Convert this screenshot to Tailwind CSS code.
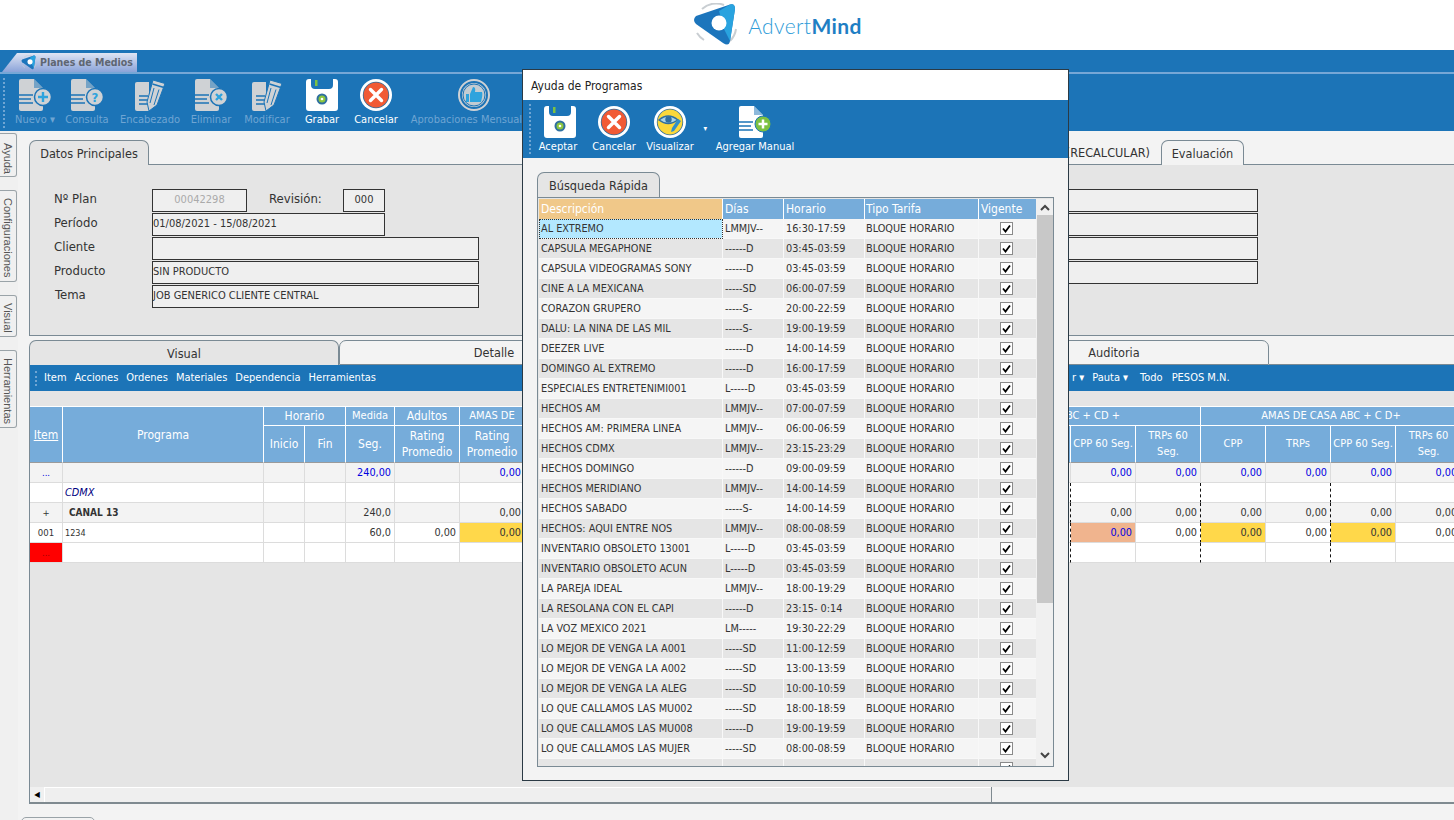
<!DOCTYPE html>
<html lang="es">
<head>
  <meta charset="UTF-8">
  <title>AdvertMind - Planes de Medios</title>
  <script src="https://cdn.jsdelivr.net/npm/@tailwindcss/browser@4"></script>
</head>
<body class="relative h-[820px] w-[1454px] overflow-hidden bg-[#f3f3f3] text-[11px] text-[#333] font-['DejaVu_Sans_Condensed','DejaVu_Sans',sans-serif]">

  <!-- iconos -->
  <svg class="hidden">
    <symbol id="doc" viewBox="0 0 32 32">
      <path d="M2 0H15L24 9V30a2 2 0 0 1-2 2H2a2 2 0 0 1-2-2V2a2 2 0 0 1 2-2Z" fill="currentColor"/>
      <path d="M15 0L24 9H15Z" fill="#1c74b7" opacity=".5"/>
      <path d="M0 16H14M0 20H12M0 24H14" stroke="#1c74b7" stroke-width="1.5"/>
      <circle cx="24" cy="18" r="8.5" fill="currentColor" stroke="#1c74b7" stroke-width="1.5"/>
    </symbol>
    <symbol id="edit" viewBox="0 0 30 32">
      <path d="M2 3H14V32H2a2 2 0 0 1-2-2V5a2 2 0 0 1 2-2Z" fill="currentColor"/>
      <path d="M4 17H13M4 21H13M4 25H13" stroke="#1c74b7" stroke-width="1.5"/>
      <path d="M18 1L30 4.500L22 26L14 32L12 23Z" fill="currentColor" stroke="#1c74b7"/>
      <path d="M17.500 5L29 8.500" stroke="#1c74b7" stroke-width="1.500"/>
      <path d="M19 9L15 24M24 10.500L19 26" stroke="#1c74b7"/>
    </symbol>
    <symbol id="disk" viewBox="0 0 32 32">
      <path d="M3 0H5V6a4 4 0 0 0 4 4H23a4 4 0 0 0 4-4V0H29a3 3 0 0 1 3 3V29a3 3 0 0 1-3 3H3a3 3 0 0 1-3-3V3a3 3 0 0 1 3-3Z" fill="#fff"/>
      <rect x="9" y="1" width="2.5" height="6" fill="#7cc142"/>
      <circle cx="16" cy="20" r="5.5" fill="#2f6f9f"/>
      <circle cx="16" cy="20" r="3.5" fill="#8cc63f"/>
      <circle cx="16" cy="20" r="1.3" fill="#fff"/>
    </symbol>
    <symbol id="cancel" viewBox="0 0 32 32">
      <circle cx="16" cy="16" r="16" fill="#fff"/>
      <circle cx="16" cy="16" r="13.2" fill="#2f6f9f"/>
      <circle cx="16" cy="16" r="12.4" fill="#f15a35"/>
      <path d="M10.5 10.5L21.5 21.5M21.5 10.5L10.5 21.5" stroke="#fff" stroke-width="3.4" stroke-linecap="round"/>
    </symbol>
    <symbol id="logo" viewBox="0 0 44 44">
      <path d="M8 6A21 21 0 0 1 30 2" fill="none" stroke="#c9ced2" stroke-width="2"/>
      <path d="M42 26A21 21 0 0 1 36 38" fill="none" stroke="#c9ced2" stroke-width="2"/>
      <path d="M10 37A21 21 0 0 1 3 30" fill="none" stroke="#c9ced2" stroke-width="2"/>
      <path d="M2 13L36 1.500Q41 0 41 6L36 38Q35 44 29 40L2 21Q-2 17 2 13Z" fill="#1c75bc"/>
      <path d="M36 1.500Q41 0 41 6L36 38L30 26L25 8Z" fill="#29a3df"/>
      <circle cx="25" cy="20" r="7.500" fill="#fff"/>
    </symbol>
  </svg>

  <!-- logo -->
  <header class="flex h-[50px] items-center justify-center bg-white pl-[102px]">
    <svg class="mr-[10px] h-[44px] w-[44px]"><use href="#logo"/></svg>
    <span class="text-[21px] leading-none tracking-[.4px] text-[#2e9bd8] font-['Lato',sans-serif] font-light">Advert<span class="font-bold text-[#1f7fc4]">Mind</span></span>
  </header>

  <!-- barra azul superior -->
  <div class="h-[81px] bg-[#1c74b7]">
    <div class="box-content flex h-[22px] items-end border-b-2 border-[#76a7d6] pl-[2px]">
      <div class="flex h-[19px] w-[135px] items-center bg-linear-to-b from-[#dfe5f3] to-[#8ba3d8] pl-[19px] text-[10.500px] font-bold text-[#5e6672] [clip-path:polygon(0_100%,15px_0,100%_0,100%_100%)]">
        <svg class="mr-[3px] h-[15px] w-[16px] shrink-0"><use href="#logo"/></svg>Planes de Medios
      </div>
    </div>
    <div class="relative flex h-[57px] pl-[10px] text-[#6fa5d3]">
      <div class="absolute top-[4px] left-[3px] h-[50px] border-l-2 border-dotted border-[#6fa5d3]"></div>
      <button class="flex w-[50px] flex-col items-center pt-[5px]">
        <svg class="h-[32px] w-[32px] text-[#cfd2d5]" viewBox="0 0 32 32"><use href="#doc"/><path d="M24 13V23M19 18H29" stroke="#2ea3dd" stroke-width="2.400"/></svg>
        <span class="mt-[1px]">Nuevo ▾</span>
      </button>
      <button class="flex w-[54px] flex-col items-center pt-[5px]">
        <svg class="h-[32px] w-[32px] text-[#cfd2d5]" viewBox="0 0 32 32"><use href="#doc"/><text x="24" y="23" text-anchor="middle" fill="#2ea3dd" font-size="13" font-weight="700">?</text></svg>
        <span class="mt-[1px]">Consulta</span>
      </button>
      <button class="flex w-[72px] flex-col items-center pt-[5px]">
        <svg class="h-[32px] w-[30px] text-[#cfd2d5]"><use href="#edit"/></svg>
        <span class="mt-[1px]">Encabezado</span>
      </button>
      <button class="flex w-[50px] flex-col items-center pt-[5px]">
        <svg class="h-[32px] w-[32px] text-[#cfd2d5]" viewBox="0 0 32 32"><use href="#doc"/><path d="M21 15L27 21M27 15L21 21" stroke="#2ea3dd" stroke-width="2.400"/></svg>
        <span class="mt-[1px]">Eliminar</span>
      </button>
      <button class="flex w-[62px] flex-col items-center pt-[5px]">
        <svg class="h-[32px] w-[30px] text-[#cfd2d5]"><use href="#edit"/></svg>
        <span class="mt-[1px]">Modificar</span>
      </button>
      <button class="flex w-[48px] flex-col items-center pt-[5px] text-white">
        <svg class="h-[32px] w-[32px]"><use href="#disk"/></svg>
        <span class="mt-[1px]">Grabar</span>
      </button>
      <button class="flex w-[60px] flex-col items-center pt-[5px] text-white">
        <svg class="h-[32px] w-[32px]"><use href="#cancel"/></svg>
        <span class="mt-[1px]">Cancelar</span>
      </button>
      <button class="flex w-[136px] flex-col items-center pt-[5px]">
        <svg class="h-[32px] w-[32px]" viewBox="0 0 32 32">
          <circle cx="16" cy="16" r="15" fill="#1c74b7" stroke="#cfd2d5" stroke-width="2"/>
          <circle cx="16" cy="16" r="12" fill="#cfd2d5"/>
          <circle cx="16" cy="16" r="11" fill="#c3ccd2" stroke="#1c74b7"/>
          <path d="M8 15H11V23H8ZM12 15L15 8Q18 8 17 13H24Q25 15 23 23H12Z" fill="#2ea3dd"/>
        </svg>
        <span class="mt-[1px] -ml-[4px] whitespace-nowrap">Aprobaciones Mensuales</span>
      </button>
    </div>
  </div>

  <div class="flex h-[689px]">
    <!-- pestañas verticales -->
    <aside class="flex w-[18px] shrink-0 flex-col items-start bg-[#f0f0f0] pt-[2px] font-['Liberation_Sans',sans-serif] text-[#555]">
      <div class="flex h-[44px] w-[17px] justify-center rounded-r-[3px] border border-l-0 border-[#9aa3a8] pt-[6px] [writing-mode:vertical-rl]">Ayuda</div>
      <div class="mt-[13px] flex h-[92px] w-[17px] justify-center rounded-r-[3px] border border-l-0 border-[#9aa3a8] pt-[4px] [writing-mode:vertical-rl]">Configuraciones</div>
      <div class="mt-[13px] flex h-[42px] w-[17px] justify-center rounded-r-[3px] border border-l-0 border-[#9aa3a8] pt-[4px] [writing-mode:vertical-rl]">Visual</div>
      <div class="mt-[13px] flex h-[78px] w-[17px] justify-center rounded-r-[3px] border border-l-0 border-[#9aa3a8] pt-[4px] [writing-mode:vertical-rl]">Herramientas</div>
    </aside>

    <main class="ml-[11px] min-w-0 flex-1">
      <!-- Datos principales -->
      <div class="flex h-[34px] items-end pt-[10px] text-[12.600px]">
        <div class="flex h-[25px] w-[120px] items-center justify-center rounded-t-[7px] border border-b-0 border-[#7a8a94] bg-[#e5e5e5] pt-[2px]">Datos Principales</div>
        <div class="flex h-[25px] w-[1012px] items-center justify-end border-b border-[#7a8a94] pt-[2px] pr-[11px]">(RECALCULAR)</div>
        <div class="flex h-[25px] w-[83px] items-center justify-center rounded-t-[7px] border border-b-0 border-[#7a8a94] pt-[2px]">Evaluación</div>
        <div class="h-[25px] flex-1 border-b border-[#7a8a94]"></div>
      </div>
      <div class="flex h-[171px] border-b border-l border-[#7a8a94] bg-[#e5e5e5] pt-[23px] text-[13px]">
        <div class="w-[450px] shrink-0 pl-[24px]">
          <div class="flex h-[24px] items-center">
            <span class="w-[98px] pb-[2px]">Nº Plan</span>
            <div class="flex h-[23px] w-[95px] items-center justify-center border border-[#333] bg-[#efefef] text-[11px] text-[#aaa]">00042298</div>
            <span class="ml-[22px] w-[74px] pb-[2px]">Revisión:</span>
            <div class="flex h-[23px] w-[42px] items-center justify-center border border-[#333] bg-[#efefef] text-[11px]">000</div>
          </div>
          <div class="flex h-[24px] items-center">
            <span class="w-[98px] pb-[2px]">Período</span>
            <div class="flex h-[23px] w-[233px] items-center border border-[#333] bg-[#efefef] text-[11px]">01/08/2021 - 15/08/2021</div>
          </div>
          <div class="flex h-[24px] items-center">
            <span class="w-[98px] pb-[2px]">Cliente</span>
            <div class="h-[23px] w-[327px] border border-[#333] bg-[#efefef]"></div>
          </div>
          <div class="flex h-[24px] items-center">
            <span class="w-[98px] pb-[2px]">Producto</span>
            <div class="flex h-[23px] w-[327px] items-center border border-[#333] bg-[#efefef] text-[11px]">SIN PRODUCTO</div>
          </div>
          <div class="flex h-[24px] items-center">
            <span class="w-[98px] pb-[2px] pl-[1px]">Tema</span>
            <div class="flex h-[23px] w-[327px] items-center border border-[#333] bg-[#efefef] text-[11px]">JOB GENERICO CLIENTE CENTRAL</div>
          </div>
        </div>
        <div class="ml-[320px] w-[458px]">
          <div class="flex h-[24px] items-center"><div class="h-[23px] w-full border border-[#333] bg-[#efefef]"></div></div>
          <div class="flex h-[24px] items-center"><div class="h-[23px] w-full border border-[#333] bg-[#efefef]"></div></div>
          <div class="flex h-[24px] items-center"><div class="h-[23px] w-full border border-[#333] bg-[#efefef]"></div></div>
          <div class="flex h-[24px] items-center"><div class="h-[23px] w-full border border-[#333] bg-[#efefef]"></div></div>
        </div>
      </div>

      <!-- pestañas del detalle -->
      <div class="mt-[4px] flex h-[25px] text-[12.600px]">
        <div class="flex w-[310px] items-center justify-center rounded-t-[7px] border border-b-0 border-[#7a8a94] bg-[#e5e5e5] pt-[2px]">Visual</div>
        <div class="flex w-[310px] items-center justify-center rounded-t-[7px] border border-[#7a8a94] pt-[2px]">Detalle</div>
        <div class="flex w-[310px] items-center justify-center border-b border-[#7a8a94]"></div>
        <div class="flex w-[310px] items-center justify-center rounded-t-[7px] border border-[#7a8a94] pt-[2px]">Auditoria</div>
        <div class="flex-1 border-b border-[#7a8a94]"></div>
      </div>

      <div class="flex h-[439px] flex-col border-l border-[#7a8a94] bg-[#e5e5e5]">
        <div class="flex h-[26px] shrink-0 items-center bg-[#1c74b7] pt-[1px] pl-[5px] text-white">
          <div class="mr-[7px] h-[15px] border-l-2 border-dotted border-[#6fa5d3]"></div>
          <span class="mr-[8px]">Item</span>
          <span class="mr-[8px]">Acciones</span>
          <span class="mr-[8px]">Ordenes</span>
          <span class="mr-[8px]">Materiales</span>
          <span class="mr-[8px]">Dependencia</span>
          <span>Herramientas</span>
          <span class="ml-[696px] mr-[8px]">r ▾</span>
          <span class="mr-[12px]">Pauta ▾</span>
          <span class="mr-[9px]">Todo</span>
          <span>PESOS M.N.</span>
        </div>

        <div class="h-[15px] shrink-0"></div>

        <table class="w-[1431px] shrink-0 table-fixed border-separate border-spacing-0">
          <colgroup>
            <col class="w-[33px]"><col class="w-[201px]"><col class="w-[41px]"><col class="w-[41px]"><col class="w-[49px]"><col class="w-[65px]"><col class="w-[65px]"><col class="w-[546px]">
            <col class="w-[65px]"><col class="w-[65px]"><col class="w-[65px]"><col class="w-[65px]"><col class="w-[65px]"><col class="w-[65px]">
          </colgroup>
          <thead class="bg-[#76acda] text-white">
            <tr class="h-[19px]">
              <th rowspan="2" class="border-r border-b border-r-white border-b-[#9a9a9a] border-t border-t-white text-[12px] font-normal underline">Item</th>
              <th rowspan="2" class="border-r border-b border-r-white border-b-[#9a9a9a] border-t border-t-white text-[12px] font-normal">Programa</th>
              <th colspan="2" class="border-r border-b border-white border-t text-[12px] font-normal">Horario</th>
              <th class="border-r border-b border-white border-t font-normal">Medida</th>
              <th class="border-r border-b border-white border-t text-[12px] font-normal">Adultos</th>
              <th class="border-r border-b border-white border-t font-normal">AMAS DE</th>
              <th colspan="3" class="whitespace-nowrap border-r border-b border-white border-t pr-[80px] text-right font-normal">AMAS DE CASA ABC + CD +</th>
              <th colspan="4" class="whitespace-nowrap border-b border-white border-t font-normal">AMAS DE CASA ABC + C D+</th>
            </tr>
            <tr class="h-[37px]">
              <th class="border-r border-b border-r-white border-b-[#9a9a9a] text-[12px] font-normal">Inicio</th>
              <th class="border-r border-b border-r-white border-b-[#9a9a9a] text-[12px] font-normal">Fin</th>
              <th class="border-r border-b border-r-white border-b-[#9a9a9a] text-[12px] font-normal">Seg.</th>
              <th class="border-r border-b border-r-white border-b-[#9a9a9a] text-[12px] font-normal leading-[16px]">Rating Promedio</th>
              <th class="border-r border-b border-r-white border-b-[#9a9a9a] text-[12px] font-normal leading-[16px]">Rating Promedio</th>
              <th class="border-r border-b border-r-white border-b-[#9a9a9a]"></th>
              <th class="border-r border-b border-r-white border-b-[#9a9a9a] font-normal">CPP 60 Seg.</th>
              <th class="border-r border-b border-r-white border-b-[#9a9a9a] font-normal leading-[16px]">TRPs 60 Seg.</th>
              <th class="border-r border-b border-r-white border-b-[#9a9a9a] font-normal">CPP</th>
              <th class="border-r border-b border-r-white border-b-[#9a9a9a] font-normal">TRPs</th>
              <th class="border-r border-b border-r-white border-b-[#9a9a9a] font-normal">CPP 60 Seg.</th>
              <th class="border-b border-b-[#9a9a9a] px-[12px] font-normal leading-[16px]">TRPs 60 Seg.</th>
            </tr>
          </thead>
          <tbody id="plan" class="text-[10.800px]"></tbody>
        </table>

        <div class="flex-1"></div>
        <div class="flex h-[17px] shrink-0 border-b-2 border-[#7f8a90]">
          <div class="flex w-[15px] items-center justify-center border-r border-white bg-[#f0f0f0] text-[8px] text-black">◀</div>
          <div class="w-[946px] border-t border-white bg-[#efefef]"></div>
          <div class="flex-1 border-l border-[#7f8a90] bg-[#f3f3f3]"></div>
        </div>
      </div>
    </main>
  </div>

  <div class="absolute top-[817px] left-[21px] h-[8px] w-[74px] rounded-t-[5px] border border-[#9aa3a8]"></div>

  <!-- Ayuda de Programas -->
  <section class="absolute top-[69px] left-[522px] flex h-[712px] w-[547px] flex-col border border-[#2b3a45] bg-[#f3f3f3]">
    <div class="flex h-[30px] shrink-0 items-center bg-white pt-[1px] pl-[8px] text-[12px] text-[#222]">Ayuda de Programas</div>
    <div class="relative flex h-[58px] shrink-0 items-start bg-[#1c74b7] text-white">
      <div class="absolute top-[4px] left-[6px] h-[50px] border-l-2 border-dotted border-[#6fa5d3]"></div>
      <button class="ml-[13px] flex w-[44px] flex-col items-center pt-[6px]">
        <svg class="ml-[4px] h-[32px] w-[32px]"><use href="#disk"/></svg>
        <span class="mt-[1px]">Aceptar</span>
      </button>
      <button class="ml-[8px] flex w-[52px] flex-col items-center pt-[6px]">
        <svg class="h-[32px] w-[32px]"><use href="#cancel"/></svg>
        <span class="mt-[1px]">Cancelar</span>
      </button>
      <button class="relative ml-[4px] flex w-[52px] flex-col items-center pt-[6px]">
        <svg class="h-[32px] w-[32px]" viewBox="0 0 32 32">
          <circle cx="16" cy="16" r="16" fill="#fff"/>
          <circle cx="16" cy="16" r="13.200" fill="#2f6f9f"/>
          <circle cx="16" cy="16" r="12.400" fill="#fbd83a"/>
          <path d="M5 14Q14 6 24 14Q14 21 5 14Z" fill="#a8d4e8" stroke="#2f6f9f" stroke-width="1.500"/>
          <circle cx="14.500" cy="13.500" r="3.200" fill="#2f6f9f"/>
          <path d="M24 13L27 15L20 25L17 26L18 22Z" fill="#2f8fcb"/>
        </svg>
        <span class="mt-[1px]">Visualizar</span>
        <span class="absolute top-[23px] right-[-11px] text-[8px]">▾</span>
      </button>
      <button class="ml-[19px] flex w-[80px] flex-col items-center pt-[6px]">
        <svg class="h-[32px] w-[32px]" viewBox="0 0 32 32">
          <path d="M2 0H15L24 9V30a2 2 0 0 1-2 2H2a2 2 0 0 1-2-2V2a2 2 0 0 1 2-2Z" fill="#fff"/>
          <path d="M15 0L24 9H15Z" fill="#1c74b7" opacity=".5"/>
          <path d="M0 16H14M0 20H12M0 24H14" stroke="#1c74b7" stroke-width="1.500"/>
          <circle cx="24" cy="18" r="8" fill="#7cc142" stroke="#1c74b7"/>
          <path d="M24 13.500V22.500M19.500 18H28.500" stroke="#fff" stroke-width="2.500"/>
        </svg>
        <span class="mt-[1px] whitespace-nowrap">Agregar Manual</span>
      </button>
    </div>

    <div class="mt-[14px] ml-[14px] flex h-[25px] w-[123px] items-center justify-center rounded-t-[7px] border border-b-0 border-[#7a8a94] bg-[#e5e5e5] pt-[2px] text-[12.600px]">Búsqueda Rápida</div>
    <div class="ml-[14px] flex h-[570px] w-[517px] overflow-hidden border border-[#7a8a94] bg-[#e5e5e5] pt-[1px] pl-[1px]">
      <table class="h-fit w-[497px] shrink-0 table-fixed border-separate border-spacing-0">
        <colgroup><col class="w-[184px]"><col class="w-[61px]"><col class="w-[81px]"><col class="w-[114px]"><col class="w-[57px]"></colgroup>
        <thead class="text-[12px] text-white">
          <tr class="h-[20px]">
            <th class="border-r border-white bg-[#f0c889] pl-[2px] text-left font-normal">Descripción</th>
            <th class="border-r border-white bg-[#76acda] pl-[2px] text-left font-normal">Días</th>
            <th class="border-r border-white bg-[#76acda] pl-[2px] text-left font-normal">Horario</th>
            <th class="border-r border-white bg-[#76acda] pl-[1px] text-left font-normal">Tipo Tarifa</th>
            <th class="bg-[#76acda] pl-[2px] text-left font-normal">Vigente</th>
          </tr>
        </thead>
        <tbody id="programas" class="text-[10.800px]"></tbody>
      </table>
      <div class="flex w-[17px] shrink-0 flex-col items-center bg-[#f0f0f0]">
        <svg class="mt-[5px] h-[8px] w-[10px]" viewBox="0 0 10 8"><path d="M1 6L5 2L9 6" fill="none" stroke="#444" stroke-width="2"/></svg>
        <div class="mt-[3px] h-[388px] w-[16px] bg-[#c8c8c8]"></div>
        <svg class="mt-[148px] h-[8px] w-[10px]" viewBox="0 0 10 8"><path d="M1 2L5 6L9 2" fill="none" stroke="#444" stroke-width="2"/></svg>
      </div>
    </div>
  </section>

  <script>
    // filas del plan
    const cell = 'border-r border-b border-[#dcdcdc] pt-[1px] pr-[3px] text-right overflow-hidden whitespace-nowrap';
    const dash = 'border-r-[#111] [border-right-style:dashed]';
    const rows = [
      { bg: 'bg-[#f3f3f3]', tone: 'text-[#0000e0]', item: '...', prog: '', seg: '240,00', ad: '', am: '0,00', vals: ['0,00','0,00','0,00','0,00','0,00','0,00'], dashes: false },
      { bg: 'bg-white', tone: '', item: '', prog: '<i class="text-[#000080]">CDMX</i>', seg: '', ad: '', am: '', vals: ['','','','','',''], dashes: true },
      { bg: 'bg-[#f3f3f3]', tone: '', item: '+', prog: '<b class="pl-[4px] text-[10px] font-bold">CANAL 13</b>', seg: '240,0', ad: '', am: '0,00', vals: ['0,00','0,00','0,00','0,00','0,00','0,00'], dashes: true },
      { bg: 'bg-white', tone: '', item: '001', prog: '<span class="text-[9px]">1234</span>', seg: '60,0', ad: '0,00', am: '0,00', vals: ['0,00','0,00','0,00','0,00','0,00','0,00'], dashes: true, fill: true },
      { bg: 'bg-white', tone: '', item: '...', prog: '', seg: '', ad: '', am: '', vals: ['','','','','',''], dashes: true, red: true }
    ];
    document.getElementById('plan').innerHTML = rows.map(r => {
      const mark = r.dashes ? dash : '';
      return `<tr class="h-[20px] ${r.bg} ${r.tone}">
        <td class="border-r border-b border-[#dcdcdc] pt-[1px] text-center text-[9.500px] ${r.red ? 'bg-[#ff0000] text-[#a00000]' : ''}">${r.item}</td>
        <td class="border-r border-b border-[#dcdcdc] pt-[1px] pl-[2px]">${r.prog}</td>
        <td class="${cell}"></td><td class="${cell}"></td>
        <td class="${cell}">${r.seg}</td>
        <td class="${cell}">${r.ad}</td>
        <td class="${cell} ${r.fill ? 'bg-[#ffd84a]' : ''}">${r.am}</td>
        <td class="${cell} ${mark}"></td>
        <td class="${cell} ${r.fill ? 'bg-[#f0b48e] text-[#0000e0]' : ''}">${r.vals[0]}</td>
        <td class="${cell} ${mark}">${r.vals[1]}</td>
        <td class="${cell} ${r.fill ? 'bg-[#ffd84a]' : ''}">${r.vals[2]}</td>
        <td class="${cell} ${mark}">${r.vals[3]}</td>
        <td class="${cell} ${r.fill ? 'bg-[#ffd84a]' : ''}">${r.vals[4]}</td>
        <td class="${cell}">${r.vals[5]}</td>
      </tr>`;
    }).join('');

    const programas = [
      ['AL EXTREMO','LMMJV--','16:30-17:59'],
      ['CAPSULA MEGAPHONE','------D','03:45-03:59'],
      ['CAPSULA VIDEOGRAMAS SONY','------D','03:45-03:59'],
      ['CINE A LA MEXICANA','-----SD','06:00-07:59'],
      ['CORAZON GRUPERO','-----S-','20:00-22:59'],
      ['DALU: LA NINA DE LAS MIL','-----S-','19:00-19:59'],
      ['DEEZER LIVE','------D','14:00-14:59'],
      ['DOMINGO AL EXTREMO','------D','16:00-17:59'],
      ['ESPECIALES ENTRETENIMI001','L-----D','03:45-03:59'],
      ['HECHOS AM','LMMJV--','07:00-07:59'],
      ['HECHOS AM: PRIMERA LINEA','LMMJV--','06:00-06:59'],
      ['HECHOS CDMX','LMMJV--','23:15-23:29'],
      ['HECHOS DOMINGO','------D','09:00-09:59'],
      ['HECHOS MERIDIANO','LMMJV--','14:00-14:59'],
      ['HECHOS SABADO','-----S-','14:00-14:59'],
      ['HECHOS: AQUI ENTRE NOS','LMMJV--','08:00-08:59'],
      ['INVENTARIO OBSOLETO 13001','L-----D','03:45-03:59'],
      ['INVENTARIO OBSOLETO ACUN','L-----D','03:45-03:59'],
      ['LA PAREJA IDEAL','LMMJV--','18:00-19:29'],
      ['LA RESOLANA CON EL CAPI','------D','23:15- 0:14'],
      ['LA VOZ MEXICO 2021','LM-----','19:30-22:29'],
      ['LO MEJOR DE VENGA LA A001','-----SD','11:00-12:59'],
      ['LO MEJOR DE VENGA LA A002','-----SD','13:00-13:59'],
      ['LO MEJOR DE VENGA LA ALEG','-----SD','10:00-10:59'],
      ['LO QUE CALLAMOS LAS MU002','-----SD','18:00-18:59'],
      ['LO QUE CALLAMOS LAS MU008','------D','19:00-19:59'],
      ['LO QUE CALLAMOS LAS MUJER','-----SD','08:00-08:59'],
      ['','','']
    ];
    const pcell = 'border-r border-b border-[#f8f8f8] pt-[1px] pl-[2px] overflow-hidden whitespace-nowrap';
    document.getElementById('programas').innerHTML = programas.map((p, i) => `
      <tr class="h-[20px] ${i % 2 ? 'bg-[#e5e5e5]' : 'bg-[#f5f5f5]'}">
        <td class="${pcell} ${i === 0 ? 'bg-[#b3e8ff] outline-1 -outline-offset-1 outline-dotted outline-[#333]' : ''}">${p[0]}</td>
        <td class="${pcell}">${p[1]}</td>
        <td class="${pcell}">${p[2]}</td>
        <td class="${pcell} !pl-[1px]">${p[0] ? 'BLOQUE HORARIO' : ''}</td>
        <td class="border-b border-[#f8f8f8]"><div class="ml-[21px] flex h-[13px] w-[13px] items-center justify-center border border-[#8a8a8a] bg-white"><svg class="h-[9px] w-[9px]" viewBox="0 0 9 9"><path d="M1 4.500L3.500 7.500L8 1.500" fill="none" stroke="#000" stroke-width="1.800"/></svg></div></td>
      </tr>`).join('');
  </script>
</body>
</html>
